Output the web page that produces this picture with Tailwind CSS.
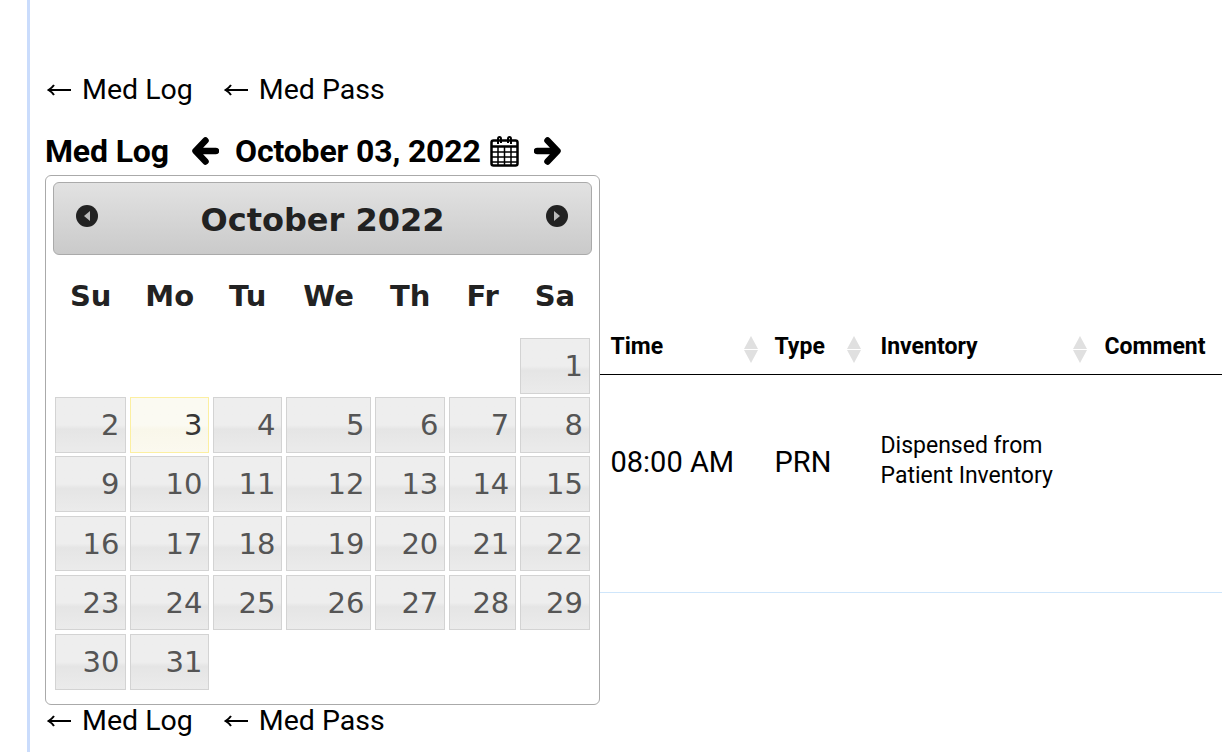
<!DOCTYPE html>
<html lang="en">
<head>
    <meta charset="UTF-8">
    <title>Med Log</title>
    <script src="https://cdn.jsdelivr.net/npm/@tailwindcss/browser@4"></script>
</head>
<body class="bg-white text-black font-['Roboto',sans-serif] overflow-hidden">
    <div class="ml-[27px] h-[752px] border-l-[3px] border-[#cadcfc] pl-[15px] relative overflow-hidden">
        <!-- top links -->
        <div class="pt-[58px] h-[121px] flex gap-[29px] text-[28.500px] leading-[36px]">
            <a href="#" class="flex items-center gap-[11px] ml-[2px]">
                <svg width="24" height="14" viewBox="0 0 24 14" fill="none" stroke="black" stroke-width="2"><path d="M1 7H24M7 2Q5 5 1.5 7Q5 9 7 12"/></svg>
                Med Log
            </a>
            <a href="#" class="flex items-center gap-[11px] ml-[2px]">
                <svg width="24" height="14" viewBox="0 0 24 14" fill="none" stroke="black" stroke-width="2"><path d="M1 7H24M7 2Q5 5 1.5 7Q5 9 7 12"/></svg>
                Med Pass
            </a>
        </div>

        <!-- title row -->
        <div class="h-[54px] flex items-center font-bold text-[32px] tracking-[-0.15px] pt-[6px]">
            <span class="w-[147px]">Med Log</span>
            <svg width="27" height="28" viewBox="0 0 27 28" class="mr-[16px]"><path d="M13.500 3.500L3.500 14L13.500 24.500M4 14H24" fill="none" stroke="black" stroke-width="6.500" stroke-linecap="round" stroke-linejoin="round"/></svg>
            <span>October 03, 2022</span>
            <svg width="29" height="32" viewBox="0 0 29 32" class="ml-[9px]" fill="none" stroke="black"><rect x="1.500" y="5.500" width="26" height="25" rx="2" stroke-width="2.500"/><path d="M1.500 11.500H27.500" stroke-width="2.500"/><path d="M2 17H27M2 22H27M2 27H27M8 12V30M14.500 12V30M21 12V30" stroke-width="1.500"/><path d="M8 9V4Q8 2 9.500 2Q11 2 11 4V8M18 8V4Q18 2 19.500 2Q21 2 21 4V9" stroke-width="2"/></svg>
            <svg width="27" height="28" viewBox="0 0 27 28" class="ml-[15px]"><path d="M13.500 3.500L23.500 14L13.500 24.500M23 14H3" fill="none" stroke="black" stroke-width="6.500" stroke-linecap="round" stroke-linejoin="round"/></svg>
        </div>

        <!-- table behind the datepicker -->
        <table class="absolute left-[570px] top-[318px] w-[622px] table-fixed border-collapse">
            <thead>
                <tr class="h-[56px] border-b border-black text-[23px] font-bold text-left">
                    <th class="w-[164px] pl-[10.500px] pt-[2px] relative">Time<span class="absolute left-[144px] top-[18px] flex flex-col gap-[1px]"><span class="w-0 h-0 border-x-[7.500px] border-x-transparent border-b-[13px] border-b-[#e0e0e0]"></span><span class="w-0 h-0 border-x-[7.500px] border-x-transparent border-t-[13px] border-t-[#e0e0e0]"></span></span></th>
                    <th class="w-[106px] pl-[10.500px] pt-[2px] relative">Type<span class="absolute left-[83px] top-[18px] flex flex-col gap-[1px]"><span class="w-0 h-0 border-x-[7.500px] border-x-transparent border-b-[13px] border-b-[#e0e0e0]"></span><span class="w-0 h-0 border-x-[7.500px] border-x-transparent border-t-[13px] border-t-[#e0e0e0]"></span></span></th>
                    <th class="w-[224px] pl-[10.500px] pt-[2px] relative">Inventory<span class="absolute left-[203px] top-[18px] flex flex-col gap-[1px]"><span class="w-0 h-0 border-x-[7.500px] border-x-transparent border-b-[13px] border-b-[#e0e0e0]"></span><span class="w-0 h-0 border-x-[7.500px] border-x-transparent border-t-[13px] border-t-[#e0e0e0]"></span></span></th>
                    <th class="pl-[10.500px] pt-[2px]">Comment</th>
                </tr>
            </thead>
            <tbody>
                <tr class="h-[218px] border-b border-[#cfe6fb] align-top">
                    <td class="pl-[10.500px] pt-[69px] text-[29px] leading-[36px]">08:00 AM</td>
                    <td class="pl-[10.500px] pt-[69px] text-[29px] leading-[36px]">PRN</td>
                    <td class="pl-[10.500px] pt-[56px] text-[23px] leading-[30px]">Dispensed from<br>Patient Inventory</td>
                    <td></td>
                </tr>
            </tbody>
        </table>

        <!-- datepicker popup -->
        <div class="absolute left-[15px] top-[175px] w-[555px] h-[530px] bg-white border border-[#aaaaaa] rounded-[6px] font-['DejaVu_Sans',sans-serif]">
            <div class="mx-[7px] mt-[6px] h-[73px] pt-[2px] border border-[#aaaaaa] rounded-[6px] bg-gradient-to-b from-[#e2e2e2] to-[#cacaca] relative flex items-center justify-center text-[#222222] font-bold text-[32px]">
                <span class="w-[22px] h-[22px] rounded-full bg-[#222222] absolute left-[22px] top-[22px] flex items-center justify-center"><span class="w-0 h-0 border-y-[5px] border-y-transparent border-r-[6px] border-r-[#bbbbbb]"></span></span>
                October 2022
                <span class="w-[22px] h-[22px] rounded-full bg-[#222222] absolute right-[23px] top-[22px] flex items-center justify-center"><span class="w-0 h-0 border-y-[5px] border-y-transparent border-l-[6px] border-l-[#bbbbbb]"></span></span>
            </div>
            <div class="mx-[9px] h-[83px] grid grid-cols-[71.400px_79.400px_69.400px_85.400px_70.400px_67.400px_70px] gap-x-[3.600px] items-center text-center font-bold text-[#222222] text-[29px]">
                <span>Su</span><span>Mo</span><span>Tu</span><span>We</span><span>Th</span><span>Fr</span><span>Sa</span>
            </div>
            <div class="mx-[9px] grid grid-cols-[71.400px_79.400px_69.400px_85.400px_70.400px_67.400px_70px] auto-rows-[55.600px] gap-x-[3.600px] gap-y-[3.600px] text-[29px] text-[#555555] text-right">
                <a class="col-start-7 border border-[#d3d3d3] bg-gradient-to-b from-[#eeeeee] from-50% via-[#e5e5e5] via-58% to-[#ebebeb] pr-[6px] leading-[54px]">1</a>
                <a class="border border-[#d3d3d3] bg-gradient-to-b from-[#eeeeee] from-50% via-[#e5e5e5] via-58% to-[#ebebeb] pr-[6px] leading-[54px]">2</a>
                <a class="border border-[#fcefa1] bg-gradient-to-b from-[#fbfaf2] from-50% via-[#f9f7ea] via-58% to-[#fbf9ef] text-[#363636] pr-[6px] leading-[54px]">3</a>
                <a class="border border-[#d3d3d3] bg-gradient-to-b from-[#eeeeee] from-50% via-[#e5e5e5] via-58% to-[#ebebeb] pr-[6px] leading-[54px]">4</a>
                <a class="border border-[#d3d3d3] bg-gradient-to-b from-[#eeeeee] from-50% via-[#e5e5e5] via-58% to-[#ebebeb] pr-[6px] leading-[54px]">5</a>
                <a class="border border-[#d3d3d3] bg-gradient-to-b from-[#eeeeee] from-50% via-[#e5e5e5] via-58% to-[#ebebeb] pr-[6px] leading-[54px]">6</a>
                <a class="border border-[#d3d3d3] bg-gradient-to-b from-[#eeeeee] from-50% via-[#e5e5e5] via-58% to-[#ebebeb] pr-[6px] leading-[54px]">7</a>
                <a class="border border-[#d3d3d3] bg-gradient-to-b from-[#eeeeee] from-50% via-[#e5e5e5] via-58% to-[#ebebeb] pr-[6px] leading-[54px]">8</a>
                <a class="border border-[#d3d3d3] bg-gradient-to-b from-[#eeeeee] from-50% via-[#e5e5e5] via-58% to-[#ebebeb] pr-[6px] leading-[54px]">9</a>
                <a class="border border-[#d3d3d3] bg-gradient-to-b from-[#eeeeee] from-50% via-[#e5e5e5] via-58% to-[#ebebeb] pr-[6px] leading-[54px]">10</a>
                <a class="border border-[#d3d3d3] bg-gradient-to-b from-[#eeeeee] from-50% via-[#e5e5e5] via-58% to-[#ebebeb] pr-[6px] leading-[54px]">11</a>
                <a class="border border-[#d3d3d3] bg-gradient-to-b from-[#eeeeee] from-50% via-[#e5e5e5] via-58% to-[#ebebeb] pr-[6px] leading-[54px]">12</a>
                <a class="border border-[#d3d3d3] bg-gradient-to-b from-[#eeeeee] from-50% via-[#e5e5e5] via-58% to-[#ebebeb] pr-[6px] leading-[54px]">13</a>
                <a class="border border-[#d3d3d3] bg-gradient-to-b from-[#eeeeee] from-50% via-[#e5e5e5] via-58% to-[#ebebeb] pr-[6px] leading-[54px]">14</a>
                <a class="border border-[#d3d3d3] bg-gradient-to-b from-[#eeeeee] from-50% via-[#e5e5e5] via-58% to-[#ebebeb] pr-[6px] leading-[54px]">15</a>
                <a class="border border-[#d3d3d3] bg-gradient-to-b from-[#eeeeee] from-50% via-[#e5e5e5] via-58% to-[#ebebeb] pr-[6px] leading-[54px]">16</a>
                <a class="border border-[#d3d3d3] bg-gradient-to-b from-[#eeeeee] from-50% via-[#e5e5e5] via-58% to-[#ebebeb] pr-[6px] leading-[54px]">17</a>
                <a class="border border-[#d3d3d3] bg-gradient-to-b from-[#eeeeee] from-50% via-[#e5e5e5] via-58% to-[#ebebeb] pr-[6px] leading-[54px]">18</a>
                <a class="border border-[#d3d3d3] bg-gradient-to-b from-[#eeeeee] from-50% via-[#e5e5e5] via-58% to-[#ebebeb] pr-[6px] leading-[54px]">19</a>
                <a class="border border-[#d3d3d3] bg-gradient-to-b from-[#eeeeee] from-50% via-[#e5e5e5] via-58% to-[#ebebeb] pr-[6px] leading-[54px]">20</a>
                <a class="border border-[#d3d3d3] bg-gradient-to-b from-[#eeeeee] from-50% via-[#e5e5e5] via-58% to-[#ebebeb] pr-[6px] leading-[54px]">21</a>
                <a class="border border-[#d3d3d3] bg-gradient-to-b from-[#eeeeee] from-50% via-[#e5e5e5] via-58% to-[#ebebeb] pr-[6px] leading-[54px]">22</a>
                <a class="border border-[#d3d3d3] bg-gradient-to-b from-[#eeeeee] from-50% via-[#e5e5e5] via-58% to-[#ebebeb] pr-[6px] leading-[54px]">23</a>
                <a class="border border-[#d3d3d3] bg-gradient-to-b from-[#eeeeee] from-50% via-[#e5e5e5] via-58% to-[#ebebeb] pr-[6px] leading-[54px]">24</a>
                <a class="border border-[#d3d3d3] bg-gradient-to-b from-[#eeeeee] from-50% via-[#e5e5e5] via-58% to-[#ebebeb] pr-[6px] leading-[54px]">25</a>
                <a class="border border-[#d3d3d3] bg-gradient-to-b from-[#eeeeee] from-50% via-[#e5e5e5] via-58% to-[#ebebeb] pr-[6px] leading-[54px]">26</a>
                <a class="border border-[#d3d3d3] bg-gradient-to-b from-[#eeeeee] from-50% via-[#e5e5e5] via-58% to-[#ebebeb] pr-[6px] leading-[54px]">27</a>
                <a class="border border-[#d3d3d3] bg-gradient-to-b from-[#eeeeee] from-50% via-[#e5e5e5] via-58% to-[#ebebeb] pr-[6px] leading-[54px]">28</a>
                <a class="border border-[#d3d3d3] bg-gradient-to-b from-[#eeeeee] from-50% via-[#e5e5e5] via-58% to-[#ebebeb] pr-[6px] leading-[54px]">29</a>
                <a class="border border-[#d3d3d3] bg-gradient-to-b from-[#eeeeee] from-50% via-[#e5e5e5] via-58% to-[#ebebeb] pr-[6px] leading-[54px]">30</a>
                <a class="border border-[#d3d3d3] bg-gradient-to-b from-[#eeeeee] from-50% via-[#e5e5e5] via-58% to-[#ebebeb] pr-[6px] leading-[54px]">31</a>
            </div>
        </div>

        <!-- bottom links -->
        <div class="absolute left-[15px] top-[703px] flex gap-[29px] text-[28.500px] leading-[36px]">
            <a href="#" class="flex items-center gap-[11px] ml-[2px]">
                <svg width="24" height="14" viewBox="0 0 24 14" fill="none" stroke="black" stroke-width="2"><path d="M1 7H24M7 2Q5 5 1.5 7Q5 9 7 12"/></svg>
                Med Log
            </a>
            <a href="#" class="flex items-center gap-[11px] ml-[2px]">
                <svg width="24" height="14" viewBox="0 0 24 14" fill="none" stroke="black" stroke-width="2"><path d="M1 7H24M7 2Q5 5 1.5 7Q5 9 7 12"/></svg>
                Med Pass
            </a>
        </div>
    </div>
</body>
</html>
